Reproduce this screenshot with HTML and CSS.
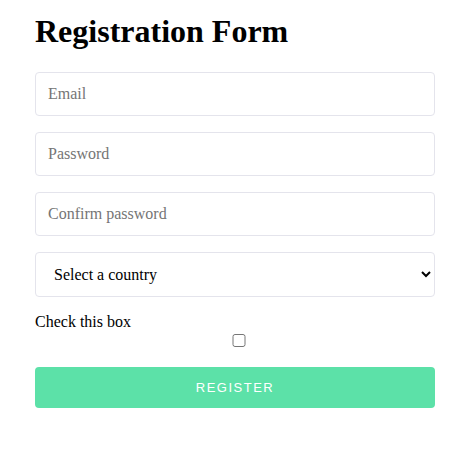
FILE: index.html
```html
<!DOCTYPE html>
<html>
<head>
<meta charset="utf-8">
<link rel="stylesheet" href="styles.css">
</head>
<body>
<div class="container">
  <h1 class="title">Registration Form</h1>
  <form class="form">
    <input class="field" type="email" placeholder="Email">
    <input class="field" type="password" placeholder="Password">
    <input class="field" type="password" placeholder="Confirm password">
    <select class="field select">
      <option>Select a country</option>
    </select>
    <div class="check">
      <label class="check-label">Check this box</label>
      <input class="check-box" type="checkbox">
    </div>
    <button class="btn" type="button">REGISTER</button>
  </form>
</div>
</body>
</html>
```
FILE: styles.css
```css
html, body {
  margin: 0;
  background: #fff;
  font-family: "Liberation Serif", "Times New Roman", serif;
}
.container {
  width: 400px;
  margin: 0 auto;
  padding-top: 13px;
  position: relative;
  left: 1px;
}
.title {
  font-size: 32px;
  font-weight: bold;
  margin: 0 0 22px;
  line-height: 37px;
  color: #000;
}
.form {
  display: flex;
  flex-direction: column;
  gap: 16px;
}
.field {
  box-sizing: border-box;
  width: 100%;
  height: 44px;
  padding: 0 12px;
  border: 1px solid #e4e4ec;
  border-radius: 4px;
  font-family: "Liberation Serif", "Times New Roman", serif;
  font-size: 16px;
  color: #000;
  background: #fff;
  outline: none;
}
.field::placeholder {
  color: #757575;
}
.select {
  height: 45px;
  padding-left: 14px;
}
.check {
  display: flex;
  flex-direction: column;
  margin-top: 0;
}
.check-label {
  font-size: 16px;
  line-height: 18px;
}
.check-box {
  box-sizing: border-box;
  width: 100%;
  height: 13px;
  margin: 3px 0 3px 4px;
}
.btn {
  height: 41px;
  margin-top: 1px;
  border: none;
  border-radius: 4px;
  background: #5ce1a8;
  color: #fff;
  font-family: "Liberation Sans", Arial, sans-serif;
  font-size: 13px;
  letter-spacing: 1.5px;
  cursor: pointer;
}
```
